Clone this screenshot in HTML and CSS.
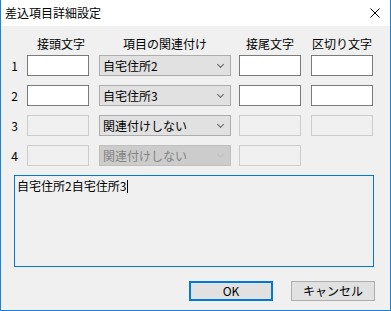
FILE: index.html
```html
<!DOCTYPE html>
<html lang="ja">
  <head>
    <meta charset="UTF-8" />
    <title>差込項目詳細設定</title>
    <link rel="stylesheet" href="styles.css">
  </head>
  <body>
    <div class="window">
      <div class="titlebar">
        <span class="title">差込項目詳細設定</span>
        <svg class="close" width="10" height="10" viewBox="0 0 10 10">
          <path d="M0.5 0.5 L9.5 9.5 M9.5 0.5 L0.5 9.5" stroke="#000" stroke-width="1" fill="none" />
        </svg>
      </div>

      <div class="content">
        <div class="fields headers">
          <span></span>
          <span class="head">接頭文字</span>
          <span class="head">項目の関連付け</span>
          <span class="head">接尾文字</span>
          <span class="head">区切り文字</span>
        </div>

        <div class="fields rows">
          <span class="num">1</span>
          <div class="textbox"></div>
          <div class="combo"><span>自宅住所2</span><i class="arrow"></i></div>
          <div class="textbox"></div>
          <div class="textbox"></div>

          <span class="num">2</span>
          <div class="textbox"></div>
          <div class="combo"><span>自宅住所3</span><i class="arrow"></i></div>
          <div class="textbox"></div>
          <div class="textbox"></div>

          <span class="num">3</span>
          <div class="textbox disabled"></div>
          <div class="combo"><span>関連付けしない</span><i class="arrow"></i></div>
          <div class="textbox disabled"></div>
          <div class="textbox disabled"></div>

          <span class="num">4</span>
          <div class="textbox disabled"></div>
          <div class="combo disabled"><span>関連付けしない</span><i class="arrow"></i></div>
          <div class="textbox disabled"></div>
          <span></span>
        </div>

        <div class="preview">自宅住所2自宅住所3<span class="caret"></span></div>

        <div class="buttons">
          <button class="btn default">OK</button>
          <button class="btn">キャンセル</button>
        </div>
      </div>
    </div>
  </body>
</html>
```

FILE: styles.css
```css
* {
  margin: 0;
  padding: 0;
  box-sizing: border-box;
}

body {
  font-family: "Noto Sans CJK JP", "Noto Sans", sans-serif;
  font-size: 12px;
  color: #000;
  background: #ffffff;
}

.window {
  width: 391px;
  height: 311px;
  border: 1px solid #1883d7;
  border-top: none;
  background: #f0f0f0;
  display: flex;
  flex-direction: column;
}

.titlebar {
  height: 26px;
  background: #ffffff;
  display: flex;
  align-items: center;
  justify-content: space-between;
  padding: 0 10px 0 4px;
}

.title {
  font-size: 12px;
  line-height: 16px;
}

.content {
  padding: 10px 0 0 0;
  display: flex;
  flex-direction: column;
}

.fields {
  display: grid;
  grid-template-columns: 26px 72px 140px 72px 62px;
  align-items: center;
}

.headers {
  height: 16px;
  margin-bottom: 3px;
}

.head {
  line-height: 16px;
  width: 62px;
  text-align: center;
  white-space: nowrap;
  margin-left: 3px;
}

.headers .head:nth-child(3) {
  width: 132px;
  margin-left: 0;
}

.headers .head:nth-child(4),
.headers .head:nth-child(5) {
  margin-left: 0;
}

.rows {
  grid-auto-rows: 21px;
  row-gap: 9px;
}

.num {
  text-align: right;
  padding-right: 9px;
  line-height: 21px;
}

.textbox {
  width: 62px;
  height: 21px;
  background: #ffffff;
  border: 1px solid #7a7a7a;
}

.textbox.disabled {
  background: #f0f0f0;
  border-color: #cccccc;
}

.combo {
  width: 132px;
  height: 21px;
  background: #e1e1e1;
  border: 1px solid #adadad;
  display: flex;
  align-items: center;
  justify-content: space-between;
  padding: 0 7px 0 3px;
  line-height: 19px;
}

.combo.disabled {
  background: #cccccc;
  border-color: #bfbfbf;
  color: #838383;
}

.arrow {
  width: 5px;
  height: 5px;
  border-right: 1px solid #606060;
  border-bottom: 1px solid #606060;
  transform: rotate(45deg);
  margin-top: -3px;
}

.combo.disabled .arrow {
  border-color: #bfbfbf;
}

.preview {
  margin: 9px 0 0 13px;
  width: 360px;
  height: 92px;
  border: 1px solid #0078d7;
  background: #f0f0f0;
  padding: 2px 2px;
  line-height: 16px;
}

.caret {
  display: inline-block;
  width: 1px;
  height: 13px;
  background: #000;
  vertical-align: -2px;
  margin-left: 1px;
}

.buttons {
  display: flex;
  justify-content: flex-end;
  gap: 18px;
  margin-top: 14px;
  padding-right: 15px;
}

.btn {
  width: 84px;
  height: 20px;
  font-family: inherit;
  font-size: 12px;
  line-height: 16px;
  color: #000;
  background: #e1e1e1;
  border: 1px solid #adadad;
}

.btn.default {
  border: 2px solid #0078d7;
}
```
